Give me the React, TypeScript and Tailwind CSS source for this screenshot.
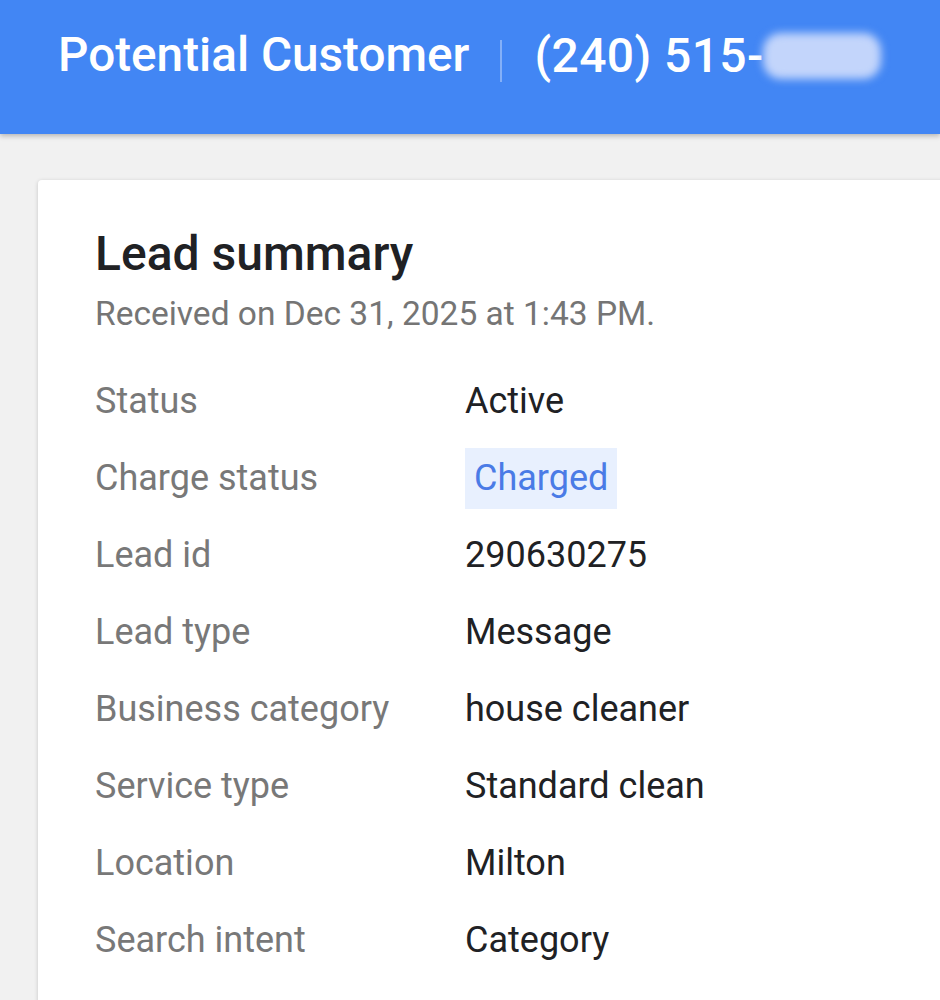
import React from "react";

const rows: { label: string; value: string; chip?: boolean }[] = [
  { label: "Status", value: "Active" },
  { label: "Charge status", value: "Charged", chip: true },
  { label: "Lead id", value: "290630275" },
  { label: "Lead type", value: "Message" },
  { label: "Business category", value: "house cleaner" },
  { label: "Service type", value: "Standard clean" },
  { label: "Location", value: "Milton" },
  { label: "Search intent", value: "Category" },
];

export default function App() {
  return (
    <div
      className="w-[940px] h-[1000px] overflow-hidden bg-[#f1f1f1] relative"
      style={{ fontFamily: "Roboto, 'Liberation Sans', sans-serif" }}
    >
      <header className="relative z-10 h-[134px] bg-[#4286f4] shadow-[0_2px_5px_rgba(0,0,0,0.25)] flex items-start pl-[58px] pt-[32px]">
        <span className="text-white font-medium text-[47.7px] leading-none whitespace-nowrap">
          Potential Customer
        </span>
        <span className="w-[2px] h-[42px] bg-white/35 ml-[31px] mr-[32px] mt-[8px]" />
        <span className="text-white font-medium text-[48px] leading-none whitespace-nowrap tracking-[0.4px]">
          (240) 515-
        </span>
        <span className="w-[118px] h-[46px] rounded-[18px] bg-[#c3d5fb] blur-[4px] mt-[1px] -ml-[1px]" />
      </header>
      <main className="pt-[46px] pl-[38px]">
        <section className="w-[960px] h-[900px] bg-white rounded-tl-[4px] shadow-[0_1px_4px_rgba(0,0,0,0.18)] pl-[57px] pt-[50px]">
          <h1 className="text-[#202124] font-medium text-[48px] leading-none">Lead summary</h1>
          <p className="text-[#757575] text-[33.5px] leading-none mt-[19px]">
            Received on Dec 31, 2025 at 1:43 PM.
          </p>
          <div className="mt-[32px] flex flex-col">
            {rows.map((r) => (
              <div key={r.label} className="h-[77px] flex items-center">
                <div className="w-[370px] text-[#787878] text-[36px] leading-none">{r.label}</div>
                {r.chip ? (
                  <div className="h-[61px] px-[9px] flex items-center bg-[#e8f0fe] text-[#4a7be6] text-[36px] leading-none">
                    {r.value}
                  </div>
                ) : (
                  <div className="text-[#202124] text-[36px] leading-none">{r.value}</div>
                )}
              </div>
            ))}
          </div>
        </section>
      </main>
    </div>
  );
}
